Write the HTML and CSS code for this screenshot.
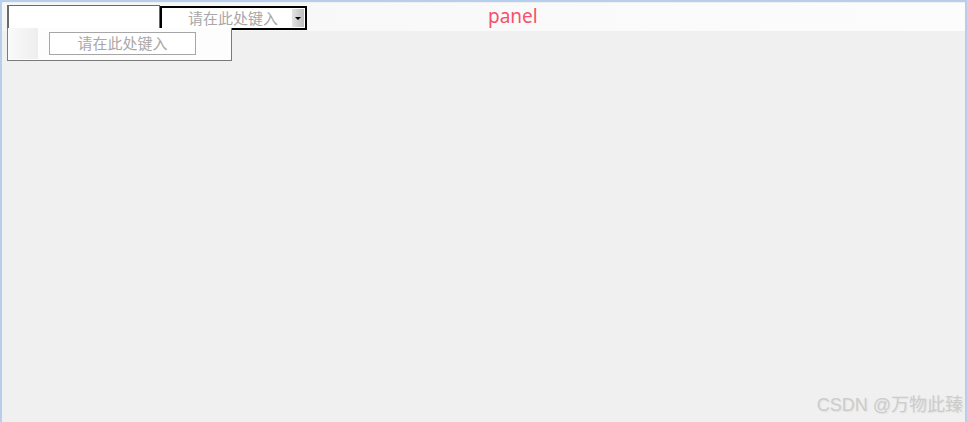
FILE: index.html
```html
<!DOCTYPE html>
<html lang="zh-CN">
<head>
    <meta charset="UTF-8">
    <meta name="viewport" content="width=device-width, initial-scale=1.0">
    <title>panel</title>
    <link rel="stylesheet" href="styles.css">
</head>
<body>
    <div class="window">
        <div class="toolbar">
            <div class="text-box"></div>
            <div class="combo">
                <span class="combo-text">请在此处键入</span>
                <span class="drop-btn"></span>
            </div>
            <div class="title">panel</div>
        </div>

        <!-- 下拉面板 -->
        <div class="dropdown">
            <div class="dropdown-side"></div>
            <div class="dropdown-input">请在此处键入</div>
        </div>

        <div class="watermark">CSDN @万物此臻</div>
    </div>
</body>
</html>
```

FILE: styles.css
```css
*{
    padding: 0;
    margin: 0;
    box-sizing: border-box;
}
body{
    width: 967px;
    height: 422px;
    overflow: hidden;
    font-family: "Noto Sans", "Noto Sans CJK SC", sans-serif;
}
.window{
    position: relative;
    width: 967px;
    height: 422px;
    background-color: #f0f0f0;
    border-top: 2px solid #b6cfec;
    border-left: 2px solid #b6cfec;
    border-right: 2px solid #b6cfec;
}

/* 顶部工具条 */
.toolbar{
    display: flex;
    align-items: flex-start;
    height: 28px;
    margin-top: 1px;
    padding-left: 5px;
    background: linear-gradient(to right, #f6f6f6, #fafafa 60%, #fcfcfc);
}
.text-box{
    width: 153px;
    height: 24px;
    margin-top: 2px;
    background-color: #fff;
    border: 1px solid #6a6a6a;
    border-left-width: 2px;
}
.combo{
    display: flex;
    align-items: center;
    width: 147px;
    height: 24px;
    margin-top: 3px;
    padding: 0 1px 0 0;
    background-color: #fff;
    border: 2px solid #000;
}
.combo-text{
    flex: 1;
    text-align: center;
    padding-left: 12px;
    font-size: 15px;
    line-height: 18px;
    color: #a8a8a8;
}
.drop-btn{
    position: relative;
    width: 12px;
    height: 18px;
    background: linear-gradient(to right, #e4e4e4, #bdbdbd);
}
.drop-btn::after{
    content: "";
    position: absolute;
    left: 3px;
    top: 8px;
    border-left: 3px solid transparent;
    border-right: 3px solid transparent;
    border-top: 3px solid #000;
}
.title{
    margin-left: 181px;
    margin-top: 2px;
    font-size: 19px;
    line-height: 22px;
    color: #f6506a;
}

/* 下拉面板 */
.dropdown{
    position: absolute;
    left: 5px;
    top: 26px;
    display: flex;
    width: 225px;
    height: 33px;
    background-color: #fdfdfd;
    border: 1px solid #7a7a7a;
    border-top: none;
}
.dropdown-side{
    width: 30px;
    height: 31px;
    background: linear-gradient(to right, #fafafa, #eeeeee);
}
.dropdown-input{
    width: 147px;
    height: 23px;
    margin: 4px 0 0 11px;
    border: 1px solid #a6a6a6;
    background-color: #fff;
    font-size: 15px;
    line-height: 20px;
    text-align: center;
    color: #a8a8a8;
}

.watermark{
    position: absolute;
    right: 2px;
    bottom: 6px;
    font-family: "Liberation Sans", "Noto Sans CJK SC", sans-serif;
    font-size: 18px;
    color: #cccccc;
    text-shadow: 1px 1px 1px #e2e2e2;
}
```
